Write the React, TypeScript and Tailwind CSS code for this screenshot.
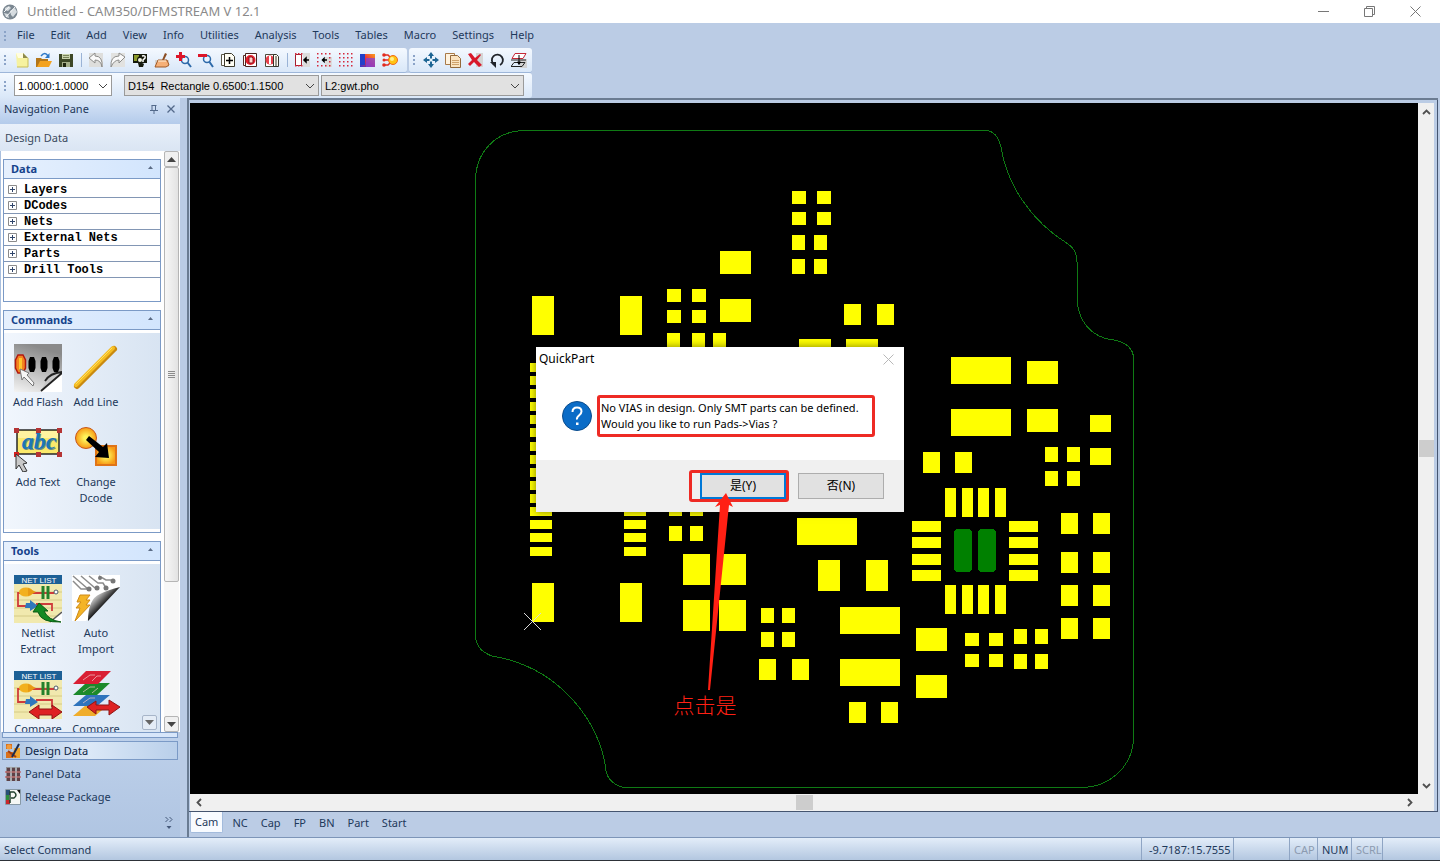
import React from "react";

type IconProps = { children: React.ReactNode };

type Rect = [x: number, y: number, w: number, h: number];

const menus = [
  "File",
  "Edit",
  "Add",
  "View",
  "Info",
  "Utilities",
  "Analysis",
  "Tools",
  "Tables",
  "Macro",
  "Settings",
  "Help",
];

const treeItems = [
  "Layers",
  "DCodes",
  "Nets",
  "External Nets",
  "Parts",
  "Drill Tools",
];

const tabs = ["Cam", "NC", "Cap", "FP", "BN", "Part", "Start"];

// every combination of the given columns and rows, all pads the same size
const pads = (xs: number[], ys: number[], w: number, h: number): Rect[] =>
  xs.flatMap((x) => ys.map((y): Rect => [x, y, w, h]));

const copper: Rect[] = [
  ...pads([792, 817], [191, 212], 14, 13),
  ...pads([792, 814], [235, 259], 13, 15),
  ...pads([720], [251, 299], 31, 23),
  ...pads([532, 620], [296, 583], 22, 39),
  ...pads([667, 692], [289, 310], 14, 13),
  ...pads([667, 692, 713], [333], 13, 15),
  ...pads([844, 877], [304], 17, 21),
  ...pads([799, 846], [339], 32, 23),
  ...pads(
    [530, 624],
    [363, 376, 389, 402, 415, 428, 442, 455, 468, 481, 494, 507, 520, 533, 547],
    22,
    9,
  ),
  ...pads([669, 690], [501, 526], 13, 15),
  ...pads([683, 719], [554, 600], 27, 31),
  ...pads([797], [518], 60, 27),
  ...pads([818, 866], [560], 22, 31),
  ...pads([761, 782], [608, 632], 13, 15),
  ...pads([759, 792], [659], 17, 21),
  ...pads([840], [607, 659], 60, 27),
  ...pads([849, 881], [702], 17, 21),
  ...pads([951], [357, 409], 60, 27),
  ...pads([1027], [361, 409], 31, 23),
  ...pads([1090], [415, 448], 21, 17),
  ...pads([1045, 1067], [447, 471], 13, 15),
  ...pads([923, 955], [452], 17, 21),
  ...pads([945, 962, 978, 995], [488, 585], 11, 29),
  ...pads([912, 1009], [521, 537, 554, 570], 29, 11),
  ...pads([1061, 1093], [513, 552, 585, 618], 17, 21),
  ...pads([916], [628, 675], 31, 23),
  ...pads([965, 989], [633, 654], 14, 13),
  ...pads([1014, 1035], [629, 654], 13, 15),
];

function SmallIcon({ children }: IconProps) {
  return (
    <svg viewBox="0 0 16 16" className="size-4 shrink-0" aria-hidden="true">
      {children}
    </svg>
  );
}

function LargeIcon({ children }: IconProps) {
  return (
    <svg viewBox="0 0 48 48" className="size-12 shrink-0" aria-hidden="true">
      {children}
    </svg>
  );
}

const dots = (xs: number[], ys: number[]) =>
  xs.flatMap((x) =>
    ys.map((y) => (
      <rect key={`${x}-${y}`} x={x} y={y} width="1.5" height="1.5" fill="#d4283c" />
    )),
  );

const fileTools = [
  {
    label: "New",
    icon: (
      <SmallIcon>
        <path d="M2 1h7l5 5v9H3z" fill="#f6f2a0" />
        <path d="M2 1h7v5H4z" fill="#fffde0" />
        <path d="M9 1l5 5H9z" fill="#8d8a4c" />
        <path d="M14 6v9H3" fill="none" stroke="#c8bd58" />
      </SmallIcon>
    ),
  },
  {
    label: "Open",
    icon: (
      <SmallIcon>
        <path d="M0 6h5l1 1h6v8H0z" fill="#b3761a" />
        <path d="M4 9h12l-3 6H1z" fill="#f3a21f" />
        <path d="M5 4q4-5 7 0" fill="none" stroke="#2c78c8" strokeWidth="1.5" />
        <path d="M13.500 1v5H9z" fill="#2c78c8" />
      </SmallIcon>
    ),
  },
  {
    label: "Save",
    icon: (
      <SmallIcon>
        <path d="M1 2h14v13H1z" fill="#3d4726" />
        <path d="M4 2h8v5H4z" fill="#c9d3ae" />
        <path d="M5 3.500h6M5 5.500h6" stroke="#78835a" />
        <path d="M4 10h8v5H4z" fill="#a5ae88" />
        <path d="M5 11h3v4H5z" fill="#20260f" />
      </SmallIcon>
    ),
  },
];

const editTools = [
  {
    label: "Undo",
    icon: (
      <SmallIcon>
        <path d="M1 1h14v14H1z" fill="#dededc" />
        <path d="M1 6l6-5v3q8 0 7 11-1-7-7-7v3z" fill="#fafafa" stroke="#8c8c8a" />
      </SmallIcon>
    ),
  },
  {
    label: "Redo",
    icon: (
      <SmallIcon>
        <path d="M1 1h14v14H1z" fill="#e2e2e0" />
        <path d="M15 5l-6-4v3Q0 4 1 15q3-7 8-7v3z" fill="#fafafa" stroke="#8c8c8a" />
      </SmallIcon>
    ),
  },
  {
    label: "Query",
    icon: (
      <SmallIcon>
        <path d="M1 2h14v9H1z" fill="#15190c" />
        <path d="M2 3h5v6H2z" fill="#8a9a2c" />
        <circle cx="9" cy="8" r="4" fill="#15190c" />
        <circle cx="8" cy="8" r="2" fill="#f3f5e6" />
        <path d="M10 4q4-1 3 2l-2 2v2" fill="none" stroke="#fff" strokeWidth="1.500" />
        <path d="M6 11l6 1-1 3H7z" fill="#15190c" />
      </SmallIcon>
    ),
  },
  {
    label: "Redraw",
    icon: (
      <SmallIcon>
        <path d="M1 8h14v7H1z" fill="#d6d2cf" />
        <path d="M11 1l2 1-3 6H8z" fill="#8a4d23" />
        <path d="M4 8h9l2 5-3 2H1z" fill="#f6b077" stroke="#a05a28" />
        <path d="M4 9h8" stroke="#fff1dd" />
      </SmallIcon>
    ),
  },
  {
    label: "Zoom in",
    icon: (
      <SmallIcon>
        <circle cx="9" cy="8" r="3.500" fill="#e8f3ff" stroke="#2d69a9" strokeWidth="1.500" />
        <path d="M11.500 10.500L15 15" stroke="#2d69a9" strokeWidth="2" />
        <path d="M3 0h3v3h3v3H6v3H3V6H0V3h3z" fill="#dd1629" />
      </SmallIcon>
    ),
  },
  {
    label: "Zoom out",
    icon: (
      <SmallIcon>
        <circle cx="9" cy="7" r="3.500" fill="#e8f3ff" stroke="#2d69a9" strokeWidth="1.500" />
        <path d="M11.500 10L15 15" stroke="#2d69a9" strokeWidth="2" />
        <path d="M0 2h9v3H0z" fill="#dd1629" />
      </SmallIcon>
    ),
  },
  {
    label: "Zoom window",
    icon: (
      <SmallIcon>
        <path d="M1.500 2.500h3v11h-3z" fill="#fff" stroke="#5a5747" />
        <path d="M4.500 1.500h7l3 3v10h-10z" fill="#fffef4" stroke="#3d3a2c" />
        <path d="M9.500 5v7M6 8.500h7" stroke="#000" strokeWidth="1.500" />
      </SmallIcon>
    ),
  },
  {
    label: "Film box",
    icon: (
      <SmallIcon>
        <path d="M1.500 3.500h3v10h-3z" fill="#fff" stroke="#5a2b24" />
        <path d="M3.500 1.500h11v13h-11z" fill="#fff" stroke="#4a2420" />
        <circle cx="8.500" cy="8" r="5" fill="#e3202e" />
        <path d="M7 5h3l1 1v5H7z" fill="#ffd6d0" stroke="#8e111b" />
      </SmallIcon>
    ),
  },
  {
    label: "Zoom previous",
    icon: (
      <SmallIcon>
        <path d="M1.500 2.500h9v12h-9z" fill="#fff" stroke="#4c4a3c" />
        <circle cx="6" cy="8" r="4.500" fill="#e8404c" />
        <path d="M6 4v8" stroke="#fff" strokeWidth="2" />
        <path d="M9.500 2.500h3l2 2v10h-5z" fill="#fffdf1" stroke="#35332a" />
        <path d="M12 4v10" stroke="#35332a" />
      </SmallIcon>
    ),
  },
];

const viewTools = [
  {
    label: "Snap to line",
    icon: (
      <SmallIcon>
        <path d="M9 1h7v14H9z" fill="#dcdcdc" />
        <path d="M1.500 2.500h6v11h-6z" fill="#fff" stroke="#a3202e" />
        {dots([1, 4, 7], [1, 13])}
        <path d="M15 8h-4M12 6L10 8l2 2z" fill="#000" stroke="#000" strokeWidth="1.500" />
      </SmallIcon>
    ),
  },
  {
    label: "Snap to grid",
    icon: (
      <SmallIcon>
        <path d="M9 5h7v10H9z" fill="#dcdcdc" />
        {dots([1, 5, 9, 13], [1, 13])}
        {dots([1, 13], [5, 9])}
        <path d="M11 8H7M8 6.500L6.500 8 8 9.500z" fill="#000" stroke="#000" strokeWidth="1.500" />
      </SmallIcon>
    ),
  },
  {
    label: "Grid",
    icon: <SmallIcon>{dots([1, 5, 9, 13], [1, 5, 9, 13])}</SmallIcon>,
  },
  {
    label: "Colors",
    icon: (
      <SmallIcon>
        <defs>
          <linearGradient id="swatch" x1="1" y1="0" x2="0" y2="1">
            <stop offset="0" stopColor="#f9a01d" />
            <stop offset="0.500" stopColor="#ee2b3e" />
            <stop offset="1" stopColor="#2c35d6" />
          </linearGradient>
        </defs>
        <path d="M0 2h15v13H0z" fill="url(#swatch)" />
        <path d="M0 2h5v11H0z" fill="#2440c9" />
        <path d="M6 6h9v9H6z" fill="#7a44e4" fillOpacity="0.7" />
      </SmallIcon>
    ),
  },
  {
    label: "Highlight",
    icon: (
      <SmallIcon>
        <path d="M1 3h5l3 3M1 8h6M1 13h5l3-3" fill="none" stroke="#e22b20" strokeWidth="1.500" />
        <circle cx="2" cy="3" r="1.800" fill="#e22b20" />
        <circle cx="2" cy="8" r="1.500" fill="#e22b20" />
        <circle cx="2" cy="13" r="1.800" fill="#e22b20" />
        <circle cx="11" cy="8" r="4.500" fill="#ffc414" stroke="#f06a1c" />
        <circle cx="10" cy="7" r="2" fill="#fff08a" />
      </SmallIcon>
    ),
  },
];

const objectTools = [
  {
    label: "Move",
    icon: (
      <SmallIcon>
        <path
          d="M8 0l3 4H9v3h3V5l4 3-4 3V9H9v3h2l-3 4-3-4h2V9H4v2L0 8l4-3v2h3V4H5z"
          fill="#1d6594"
        />
        <path d="M6.500 6.500h3v3h-3z" fill="#e6f6ff" />
      </SmallIcon>
    ),
  },
  {
    label: "Copy",
    icon: (
      <SmallIcon>
        <path d="M.5 1.500h9v11h-9z" fill="#fff3df" stroke="#a87a48" />
        <path d="M5.500 3.500h7l3 3v9h-10z" fill="#fbe3bf" stroke="#94693a" />
        <path d="M7 8.500h7M7 10.500h7M7 12.500h7" stroke="#d0a26a" />
      </SmallIcon>
    ),
  },
  {
    label: "Delete",
    icon: (
      <SmallIcon>
        <path d="M9 1h7v14H9z" fill="#d5d5d5" />
        <path d="M1 2l3-1 4 5 5-4 1 1-4 5 5 5-3 2-5-5-4 4-2-2 4-4z" fill="#d8182b" />
      </SmallIcon>
    ),
  },
  {
    label: "Rotate",
    icon: (
      <SmallIcon>
        <path d="M5 12.500A5.500 5.500 0 1 1 11 13" fill="none" stroke="#20242a" strokeWidth="1.800" />
        <path d="M1 10h6v6z" fill="#20242a" />
      </SmallIcon>
    ),
  },
  {
    label: "Mirror",
    icon: (
      <SmallIcon>
        <path d="M9 7h7v9H9z" fill="#d3d3d3" />
        <path d="M4 1.500h11l-3 5H1z" fill="#fff" stroke="#c62a39" />
        <path d="M0 8h15" stroke="#222" />
        <path d="M3 10.500h11l-3 4H0z" fill="none" stroke="#222" />
        <path d="M8 3v8M6.500 10L8 12.500 9.500 10z" fill="#000" stroke="#000" />
      </SmallIcon>
    ),
  },
];

function NetlistArt() {
  return (
    <>
      <path d="M0 0h48v48H0z" fill="#f1e9ae" />
      <path d="M0 17h48M0 25h48M0 33h48M0 41h48" stroke="#d4ca86" />
      <path d="M0 0h48v9H0z" fill="#1d6096" />
      <text
        x="25"
        y="8"
        fill="#fff"
        fontSize="8"
        fontFamily="Liberation Sans, sans-serif"
        textAnchor="middle"
      >
        NET LIST
      </text>
      <path d="M10 18H4v13h10M18 18h22M22 29h16v7" fill="none" stroke="#cf3b3b" strokeWidth="1.800" />
      <ellipse cx="12" cy="17" rx="7" ry="4.500" fill="#f2b01e" />
      <path d="M14 13l8 4-8 4z" fill="#e89a14" />
      <path d="M12 28h4v-3l8 6-8 5v-3h-5z" fill="#2f78bd" />
      <path d="M29 11v13M34 11v13" stroke="#23812b" strokeWidth="3" />
      <circle cx="42" cy="17" r="2" fill="#fff" stroke="#4b5a68" />
    </>
  );
}

const commandItems = [
  {
    label: "Add Flash",
    icon: (
      <LargeIcon>
        <defs>
          <linearGradient id="flash-bg" x1="0.300" y1="0" x2="0" y2="1">
            <stop offset="0" stopColor="#8a8a8a" />
            <stop offset="1" stopColor="#f4f4f4" />
          </linearGradient>
        </defs>
        <path d="M0 0h48v48H0z" fill="url(#flash-bg)" />
        <path d="M48 29v19H27z" fill="#fff" />
        <path d="M48 28L27 47l6-12q5-7 15-7z" fill="#c8c8c8" />
        <path d="M48 28q-12 1-17 9M48 29L27 47" fill="none" stroke="#222" strokeWidth="1.800" />
        <path d="M16 13h4l1.500 4v7L20 28h-4l-1.500-4v-7zM28 13h4l1.500 4v7L32 28h-4l-1.500-4v-7zM40 13h4l1.500 4v7L44 28h-4l-1.500-4v-7z" />
        <path d="M4 11h5l2.500 5v8L9 29H4l-2.500-5v-8z" fill="#f4831f" stroke="#b3190f" strokeWidth="1.500" />
        <path d="M5 14h3v12H5z" fill="#ffc62e" />
        <path d="M6 25l9 4-2 2 7 8-1 3-9-9-2 3z" fill="#f6f6f6" stroke="#777" />
      </LargeIcon>
    ),
  },
  {
    label: "Add Line",
    icon: (
      <LargeIcon>
        <path d="M5 42L42 5" stroke="#c98a10" strokeWidth="6" strokeLinecap="round" />
        <path d="M4 41L41 4" stroke="#f5bd22" strokeWidth="4" strokeLinecap="round" />
        <path d="M4 40L40 4" stroke="#ffdf63" strokeLinecap="round" />
      </LargeIcon>
    ),
  },
  {
    label: "Add Text",
    icon: (
      <LargeIcon>
        <path d="M3 6h42v24H3z" fill="#fbe96b" stroke="#272727" strokeWidth="1.500" />
        <path d="M4 7h40v7H4z" fill="#fff3a0" />
        <text
          x="26"
          y="26"
          fill="#6c8a86"
          fontSize="24"
          fontWeight="bold"
          fontStyle="italic"
          fontFamily="Liberation Serif, serif"
          textAnchor="middle"
        >
          abc
        </text>
        <text
          x="25"
          y="25"
          fill="#1b77b8"
          fontSize="24"
          fontWeight="bold"
          fontStyle="italic"
          fontFamily="Liberation Serif, serif"
          textAnchor="middle"
        >
          abc
        </text>
        <path d="M0 4h5v5H0zM22 4h5v5h-5zM43 4h5v5h-5zM43 28h5v5h-5zM22 28h5v5h-5z" fill="#b53434" />
        <path d="M0 28h5v5H0z" fill="#d42020" />
        <path d="M2 30l11 9-4 1 4 7-4 1-4-7-3 4z" fill="#c9c9c9" stroke="#333" />
      </LargeIcon>
    ),
  },
  {
    label: "Change Dcode",
    icon: (
      <LargeIcon>
        <defs>
          <radialGradient id="dcode">
            <stop offset="0.200" stopColor="#fff45a" />
            <stop offset="1" stopColor="#f79a14" />
          </radialGradient>
        </defs>
        <circle cx="14" cy="14" r="10.500" fill="url(#dcode)" stroke="#c8571c" />
        <path d="M24 22h20v19H24z" fill="url(#dcode)" stroke="#e07417" strokeWidth="2" />
        <path d="M17 12l14 11 4-4 2 15-14-1 4-5L14 16z" fill="#000" />
      </LargeIcon>
    ),
  },
];

const toolItems = [
  {
    label: "Netlist Extract",
    icon: (
      <LargeIcon>
        <NetlistArt />
        <path d="M48 36v12H36z" fill="#fff" />
        <path d="M48 37L36 47" stroke="#555" strokeWidth="1.500" />
        <path d="M25 28l9 8h-4q4 9 17 11-20 1-23-10h-5z" fill="#138a22" stroke="#0a5c14" />
      </LargeIcon>
    ),
  },
  {
    label: "Auto Import",
    icon: (
      <LargeIcon>
        <defs>
          <linearGradient
            id="page-curl"
            gradientUnits="userSpaceOnUse"
            x1="20"
            y1="18"
            x2="33"
            y2="31"
          >
            <stop offset="0" stopColor="#fff" />
            <stop offset="0.400" stopColor="#a5a5a5" />
            <stop offset="0.900" stopColor="#1a1a1a" />
          </linearGradient>
        </defs>
        <path d="M0 0h48v12L14 46H0z" fill="#fff" />
        <path d="M48 12L16 46q0-22 12-27 8-4 20-7z" fill="url(#page-curl)" />
        <path
          d="M1 1l15 13M9 1l14 12M1 6l8 8h7M17 1l9 7h5l3 5M27 1l7 4h5"
          fill="none"
          stroke="#8c8c8c"
          strokeWidth="1.500"
        />
        <circle cx="17" cy="14" r="2.500" fill="#777" />
        <circle cx="25" cy="13" r="2.500" fill="#777" />
        <circle cx="34" cy="13" r="2.500" fill="#777" />
        <circle cx="28" cy="3" r="2" fill="#777" />
        <circle cx="41" cy="6" r="2.500" fill="#777" />
        <path d="M8 20h10l-4 5h4l-4 5h4L3 46l5-13H4l5-6H5z" fill="#f4b426" stroke="#cf8a16" />
      </LargeIcon>
    ),
  },
  {
    label: "Compare",
    icon: (
      <LargeIcon>
        <NetlistArt />
        <path d="M15 41l10-7v4h13v-4l10 7-10 7v-4H25v4z" fill="#de2222" stroke="#8f1414" />
      </LargeIcon>
    ),
  },
  {
    label: "Compare",
    icon: (
      <LargeIcon>
        <path d="M14 34h22L23 45H1z" fill="#f0ad2b" />
        <path d="M14 24h24L25 35H1z" fill="#2f74bd" />
        <path d="M14 12h24L25 24H1z" fill="#1c8a2b" />
        <path d="M14 0h25L26 13H1z" fill="#d91f33" />
        <path
          d="M11 9l7-5h5M20 10l5-5h4M11 21l7-5h5M20 22l6-5M11 32l7-5h5"
          fill="none"
          stroke="#f0c9c9"
          strokeWidth="0.700"
        />
        <path d="M15 36l9-6v4h13v-5l11 7-11 8v-5H24v4z" fill="#de2222" stroke="#8f1414" />
      </LargeIcon>
    ),
  },
];

const views = [
  {
    label: "Design Data",
    icon: (
      <SmallIcon>
        <path d="M1 1h6v5H1zM1 9h7v6H1z" fill="#d9701c" />
        <circle cx="4" cy="4" r="2.500" fill="#f19b3c" />
        <path d="M9 5h6v10H8z" fill="#efa42b" />
        <path d="M3 8l8 6" stroke="#a33c10" strokeWidth="2" />
        <path d="M14 1L7 14" stroke="#1d2c50" strokeWidth="2" />
      </SmallIcon>
    ),
  },
  {
    label: "Panel Data",
    icon: (
      <SmallIcon>
        <path d="M1 1h14v14H1z" fill="#8d8f93" />
        <path d="M2 2h3v3H2zM7 2h3v3H7zM12 2h3v3h-3zM2 7h3v3H2zM7 7h3v3H7zM12 7h3v3h-3zM2 12h3v3H2zM7 12h3v3H7zM12 12h3v3h-3z" fill="#5d4248" />
        <path d="M0 6h16M0 11h16" stroke="#c2413f" />
        <path d="M6 0v16M11 0v16" stroke="#bfc7cc" />
      </SmallIcon>
    ),
  },
  {
    label: "Release Package",
    icon: (
      <SmallIcon>
        <path d="M.5.5h15v15H.5z" fill="#f5f7f5" stroke="#8799a6" />
        <path d="M1 1h4v5H1z" fill="#274f77" />
        <path d="M1 6h3v5H1z" fill="#2b8c3c" />
        <path d="M1 11h4v4H1z" fill="#c9262c" />
        <path d="M5 14V3h4q4 3 0 6H6" fill="none" stroke="#1f3f2c" strokeWidth="1.500" />
        <path d="M12 1h3v4z" fill="#111" />
      </SmallIcon>
    ),
  },
];

function Grip() {
  return (
    <svg viewBox="0 0 11 16" className="h-4 w-[11px] shrink-0" aria-hidden="true">
      <path d="M4 3h2v2H4zM4 7h2v2H4zM4 11h2v2H4z" fill="#8ba3c7" />
    </svg>
  );
}

function ToolButtons({ items }: { items: { label: string; icon: React.ReactNode }[] }) {
  return (
    <>
      {items.map((item) => (
        <button
          key={item.label}
          aria-label={item.label}
          className="flex size-[22px] shrink-0 items-center justify-center"
        >
          {item.icon}
        </button>
      ))}
    </>
  );
}

function Separator() {
  return (
    <div className="flex w-2 shrink-0 justify-center">
      <div className="h-3.5 w-px bg-[#9ab3d6]" />
    </div>
  );
}

function Combo({ label, value, className }: { label: string; value: string; className: string }) {
  return (
    <div className={`relative h-[21px] shrink-0 ${className}`}>
      <select
        aria-label={label}
        className="size-full appearance-none border border-[#9a9a9a] pt-px pr-5 pl-[3px] font-['Liberation_Sans',sans-serif] text-[11px] text-black"
      >
        <option>{value}</option>
      </select>
      <svg
        viewBox="0 0 10 6"
        className="pointer-events-none absolute top-2 right-1 h-1.5 w-2.5"
        aria-hidden="true"
      >
        <path d="M1 1l4 4 4-4" fill="none" stroke="#444" />
      </svg>
    </div>
  );
}

function PanelHeader({ title }: { title: string }) {
  return (
    <button className="flex h-[19px] w-full shrink-0 items-center justify-between border-b border-[#7b9ac6] bg-linear-to-r from-[#e6f0fd] to-[#d2e5fd] px-[7px] pt-px font-bold text-[#15428b]">
      {title}
      <svg viewBox="0 0 5 3" className="mb-1 h-[3px] w-[5px]" aria-hidden="true">
        <path d="M0 3l2.500-3L5 3z" fill="#5a6b85" />
      </svg>
    </button>
  );
}

function IconGrid({ items }: { items: { label: string; icon: React.ReactNode }[] }) {
  return (
    <div className="mt-[3px] grid grid-cols-[58px_58px] gap-y-3.5 bg-linear-to-r from-[#f1f6fd] to-[#d8e4f2] pt-[11px] pb-[23px] pl-[5px]">
      {items.map((item, i) => (
        <button key={i} className="flex flex-col items-center gap-0.5 text-center leading-4">
          {item.icon}
          <span>{item.label}</span>
        </button>
      ))}
    </div>
  );
}

function NavigationPane() {
  return (
    <aside className="flex w-[180px] shrink-0 flex-col text-[#1e395b]">
      <div className="flex h-[26px] shrink-0 items-center justify-between bg-linear-to-b from-[#d9e6f7] to-[#b4cbeb] px-1 pb-1">
        <span>Navigation Pane</span>
        <div className="flex items-center gap-[7px]">
          <button aria-label="Pin">
            <svg viewBox="0 0 10 10" className="size-2.5">
              <path d="M3 1.500v5M6.500 1.500v5M2.500 1.500h5M1 6.500h8M5 7v3" fill="none" stroke="#53698a" />
            </svg>
          </button>
          <button aria-label="Close pane">
            <svg viewBox="0 0 10 10" className="size-2.5">
              <path d="M1.500 1.500l7 7M8.500 1.500l-7 7" stroke="#53698a" strokeWidth="1.300" />
            </svg>
          </button>
        </div>
      </div>

      <div className="flex h-[27px] shrink-0 items-center bg-linear-to-b from-[#e9f0fa] to-[#dae5f3] pt-px pl-[5px] text-[#3b4a60]">
        Design Data
      </div>

      <div className="flex min-h-0 flex-1 border-l border-[#a9bfde] bg-white pl-0.5">
        <div className="relative flex min-w-0 flex-1 flex-col gap-2 overflow-hidden pt-2">
          <section className="flex h-[143px] shrink-0 flex-col border border-[#7b9ac6]">
            <PanelHeader title="Data" />
            <ul className="pt-[3px] font-['Liberation_Mono',monospace] text-[12px] font-bold text-black">
              {treeItems.map((item) => (
                <li key={item} className="border-b border-[#8296b4]">
                  <button className="flex h-[15px] w-full items-center gap-[7px] pl-1">
                    <svg viewBox="0 0 9 9" className="size-[9px]" aria-hidden="true">
                      <path d="M.5.5h8v8h-8z" fill="#fff" stroke="#8b8b8b" />
                      <path d="M2 4.500h5M4.500 2v5" stroke="#31466b" />
                    </svg>
                    {item}
                  </button>
                </li>
              ))}
            </ul>
          </section>

          <section className="shrink-0 border border-[#7b9ac6] pb-[3px]">
            <PanelHeader title="Commands" />
            <IconGrid items={commandItems} />
          </section>

          <section className="shrink-0 border border-[#7b9ac6]">
            <PanelHeader title="Tools" />
            <IconGrid items={toolItems} />
          </section>

          <button
            aria-label="More tools"
            className="absolute right-1 bottom-[2px] flex size-[15px] items-center justify-center rounded-[2px] border border-[#a7b5c9] bg-[#e4ecf6]"
          >
            <svg viewBox="0 0 9 5" className="h-[5px] w-[9px]">
              <path d="M0 0h9L4.500 5z" fill="#666" />
            </svg>
          </button>
        </div>

        <div className="mr-px ml-[3px] flex w-[15px] shrink-0 flex-col bg-[#f7f7f7]">
          <button
            aria-label="Scroll up"
            className="flex h-4 items-center justify-center rounded-[2px] border border-[#b5b5b5] bg-[#f0f0f0]"
          >
            <svg viewBox="0 0 9 5" className="h-[5px] w-[9px]">
              <path d="M0 5h9L4.500 0z" fill="#444" />
            </svg>
          </button>
          <div className="flex h-5/7 items-center justify-center rounded-[2px] border border-[#b5b5b5] bg-linear-to-r from-[#f7f7f7] to-[#e3e3e3]">
            <svg viewBox="0 0 7 7" className="size-[7px]" aria-hidden="true">
              <path d="M0 .5h7M0 2.500h7M0 4.500h7M0 6.500h7" stroke="#8c8c8c" />
            </svg>
          </div>
          <button
            aria-label="Scroll down"
            className="mt-auto flex h-4 items-center justify-center rounded-[2px] border border-[#b5b5b5] bg-[#f0f0f0]"
          >
            <svg viewBox="0 0 9 5" className="h-[5px] w-[9px]">
              <path d="M0 0h9L4.500 5z" fill="#444" />
            </svg>
          </button>
        </div>
      </div>

      <div className="mx-0.5 h-[6px] shrink-0 border border-[#7b9ac6] bg-[#d7e6fa]" />

      <nav className="flex flex-col gap-1 bg-linear-to-b from-[#bdd0ea] to-[#b0c5e2] px-0.5 pt-[3px]">
        {views.map((view, i) => (
          <button
            key={view.label}
            className={`flex h-[19px] items-center gap-1 border px-0.5 pt-px ${
              i === 0
                ? "border-[#7b9ac6] bg-linear-to-r from-[#aec6e4] via-[#dbe8f7] to-[#b9cfea] text-[#0c2445]"
                : "border-transparent"
            }`}
          >
            {view.icon}
            {view.label}
          </button>
        ))}
        <button aria-label="Configure buttons" className="mb-[3px] flex h-6 items-center self-end pr-1">
          <svg viewBox="0 0 10 13" className="h-[13px] w-2.5">
            <path d="M1.500 1l2.500 2.500L1.500 6M5.500 1L8 3.500 5.500 6" fill="none" stroke="#45597a" />
            <path d="M2.500 10h5L5 13z" fill="#45597a" />
          </svg>
        </button>
      </nav>
    </aside>
  );
}

function Board() {
  return (
    <svg
      viewBox="190 103 1228 691"
      className="block size-full"
      shapeRendering="crispEdges"
      role="img"
      aria-label="Board layout"
    >
      <path
        d="M524 130.500H986Q997 131 1001 147C1007 185 1031 221 1068 244Q1077 250 1077 262V297C1077 320 1091 338 1114 340Q1133 344 1133.500 358V738C1133 766 1110 787 1082 787.500H624Q609 784 606 771C601 723 560 667 492 656Q475 650 475.500 634V182C475 153 495 131 524 130.500Z"
        fill="none"
        stroke="#0f7a14"
      />
      {copper.map(([x, y, w, h]) => (
        <rect key={`${x}-${y}`} x={x} y={y} width={w} height={h} fill="#ffff00" />
      ))}
      <rect x="954" y="529" width="18" height="43" rx="4" fill="#008000" />
      <rect x="978" y="529" width="18" height="43" rx="4" fill="#008000" />
      <path d="M524 613l17 17M541 613l-17 17" stroke="#d8d8d8" />
    </svg>
  );
}

function Workspace() {
  return (
    <main className="mr-0.5 ml-[7px] flex min-w-0 flex-1 flex-col border-t-2 border-l-2 border-[#6b7c92]">
      <div className="flex min-h-0 flex-1 flex-col border-r border-b border-[#44546f] pt-[3px] pr-[3px] pl-px">
        <div className="flex min-h-0 flex-1">
          <div className="min-w-0 flex-1 bg-black">
            <Board />
          </div>
          <div className="flex w-4 shrink-0 flex-col items-center justify-between bg-[#f0f0f0]">
            <button aria-label="Scroll canvas up" className="flex h-[17px] items-center">
              <svg viewBox="0 0 9 6" className="h-1.5 w-[9px]">
                <path d="M1 5l3.500-3.500L8 5" fill="none" stroke="#505050" strokeWidth="1.800" />
              </svg>
            </button>
            <div className="h-[17px] w-[15px] bg-[#cdcdcd]" />
            <button aria-label="Scroll canvas down" className="flex h-[17px] items-center">
              <svg viewBox="0 0 9 6" className="h-1.5 w-[9px]">
                <path d="M1 1l3.500 3.500L8 1" fill="none" stroke="#505050" strokeWidth="1.800" />
              </svg>
            </button>
          </div>
        </div>
        <div className="flex h-[17px] shrink-0 items-center justify-between bg-[#f0f0f0] pr-4">
          <button aria-label="Scroll canvas left" className="flex w-[17px] justify-center">
            <svg viewBox="0 0 6 9" className="h-[9px] w-1.5">
              <path d="M5 1L1.500 4.500 5 8" fill="none" stroke="#505050" strokeWidth="1.800" />
            </svg>
          </button>
          <div className="h-[15px] w-[17px] bg-[#cdcdcd]" />
          <button aria-label="Scroll canvas right" className="flex w-[17px] justify-center">
            <svg viewBox="0 0 6 9" className="h-[9px] w-1.5">
              <path d="M1 1l3.500 3.500L1 8" fill="none" stroke="#505050" strokeWidth="1.800" />
            </svg>
          </button>
        </div>
      </div>
      <div className="flex h-[25px] shrink-0 items-start gap-[5px] pl-px text-[#1e395b]">
        {tabs.map((tab, i) => (
          <button
            key={tab}
            className={`h-[21px] px-1 pt-px ${
              i === 0 ? "rounded-b-[2px] border border-t-0 border-[#a3bbdc] bg-[#f8fbff]" : ""
            }`}
          >
            {tab}
          </button>
        ))}
      </div>
    </main>
  );
}

function QuickPartDialog() {
  return (
    <div className="absolute inset-0 flex items-center justify-center pb-0.5">
      <div
        role="dialog"
        aria-label="QuickPart"
        className="relative w-[368px] bg-white text-black shadow-[0_0_8px_rgba(0,0,0,0.5)]"
      >
        <div className="flex h-6 items-center justify-between pr-2.5 pl-[3px] text-[12px]">
          <span>QuickPart</span>
          <button aria-label="Close dialog">
            <svg viewBox="0 0 11 11" className="size-[11px]">
              <path d="M.5.5l10 10M10.500.5l-10 10" stroke="#b8b8b8" />
            </svg>
          </button>
        </div>
        <div className="flex h-[89px] items-center gap-[5px] pl-[26px]">
          <svg viewBox="0 0 30 30" className="size-[30px] shrink-0" aria-hidden="true">
            <circle cx="15" cy="15" r="14.500" fill="#0a6cc7" stroke="#0b4c8c" />
            <path
              d="M10.500 11q0-4.500 4.500-4.500t4.500 4q0 2-2.500 4t-2 4"
              fill="none"
              stroke="#fff"
              strokeWidth="2"
            />
            <path d="M14 21.500h2.500v2.500H14z" fill="#fff" />
          </svg>
          <p className="w-[278px] rounded-[3px] border-3 border-[#ee2a24] px-px py-[2px] leading-4 whitespace-nowrap">
            No VIAS in design. Only SMT parts can be defined.
            <br />
            Would you like to run Pads-&gt;Vias ?
          </p>
        </div>
        <div className="flex h-[52px] items-center justify-end gap-[9px] bg-[#f0f0f0] pr-5">
          <div className="rounded-[3px] border-3 border-[#ee2a24] pl-2">
            <button className="block h-[26px] w-[86px] border-2 border-[#0078d7] bg-[#e1e1e1] text-[12px]">
              是(Y)
            </button>
          </div>
          <button className="h-[26px] w-[86px] border border-[#adadad] bg-[#e1e1e1] text-[12px]">
            否(N)
          </button>
        </div>
        <div className="pointer-events-none absolute top-[146px] left-[136px] flex w-[66px] flex-col items-center text-[#ff2014]">
          <svg viewBox="672 493 66 198" className="h-[198px] w-[66px]" aria-hidden="true">
            <path d="M726 493l7 14-4-2-19 185h-2l12-185-5 2z" fill="#ff2014" />
          </svg>
          <span className="font-['Noto_Sans_CJK_SC',sans-serif] text-[21px] leading-[26px] font-light whitespace-nowrap">
            点击是
          </span>
        </div>
      </div>
    </div>
  );
}

function App() {
  return (
    <div className="relative flex h-screen flex-col overflow-hidden bg-[#bbcce5] font-['Noto_Sans','Noto_Sans_CJK_SC',sans-serif] text-[11px]">
      <header className="flex h-[23px] shrink-0 items-center justify-between bg-white pr-[19px] pl-0.5 text-[#8a8a8a]">
        <div className="flex items-center gap-[9px]">
          <SmallIcon>
            <circle cx="8" cy="8" r="7.500" fill="#7b8791" />
            <path d="M3 4l4-2 2 2-3 3-3-1zM8 7l5-3 2 4-4 5-2-2zM2 9l4 1 1 4-3-1z" fill="#d5dbdf" />
            <path d="M4 13L13 3M2 8l5-5" stroke="#f4f6f7" />
          </SmallIcon>
          <h1 className="text-[13px]">Untitled - CAM350/DFMSTREAM V 12.1</h1>
        </div>
        <div className="flex items-center gap-[35px]">
          <button aria-label="Minimize">
            <svg viewBox="0 0 11 11" className="size-[11px]">
              <path d="M0 5.500h11" stroke="#777" />
            </svg>
          </button>
          <button aria-label="Restore">
            <svg viewBox="0 0 11 11" className="size-[11px]">
              <path d="M.5 2.500h8v8h-8zM2.500 2V.5h8v8H9" fill="none" stroke="#777" />
            </svg>
          </button>
          <button aria-label="Close">
            <svg viewBox="0 0 11 11" className="size-[11px]">
              <path d="M.5.5l10 10M10.500.5l-10 10" stroke="#777" />
            </svg>
          </button>
        </div>
      </header>

      <nav className="flex h-[25px] shrink-0 items-center text-[#1e395b]">
        <Grip />
        <div className="flex gap-4 pl-1.5">
          {menus.map((menu) => (
            <button key={menu}>{menu}</button>
          ))}
        </div>
      </nav>

      <div className="flex h-[25px] shrink-0 gap-0.5">
        <div className="flex items-center rounded-r-[3px] border-b border-[#9db6d9] bg-linear-to-b from-[#f4f9ff] to-[#d9e7f8] pr-1.5">
          <Grip />
          <ToolButtons items={fileTools} />
          <Separator />
          <ToolButtons items={editTools} />
          <Separator />
          <ToolButtons items={viewTools} />
        </div>
        <div className="flex items-center rounded-[3px] border-b border-[#9db6d9] bg-linear-to-b from-[#f4f9ff] to-[#d9e7f8] pr-0.5">
          <Grip />
          <ToolButtons items={objectTools} />
        </div>
      </div>

      <div className="flex h-[25px] shrink-0">
        <div className="flex items-center rounded-r-[3px] bg-linear-to-b from-[#f4f9ff] to-[#d9e7f8] pr-2">
          <Grip />
          <div className="flex pl-[3px]">
            <Combo label="Grid" value="1.0000:1.0000" className="mr-3 w-[98px] bg-white" />
            <Combo
              label="Aperture"
              value={"D154\u00a0 Rectangle 0.6500:1.1500"}
              className="mr-0.5 w-[195px] bg-[#e1e1e1]"
            />
            <Combo label="Layer" value="L2:gwt.pho" className="w-[203px] bg-[#e1e1e1]" />
          </div>
        </div>
      </div>

      <div className="flex min-h-0 flex-1">
        <NavigationPane />
        <Workspace />
      </div>

      <footer className="flex h-6 shrink-0 items-stretch justify-between border-t border-b border-t-[#7d95b8] border-b-[#2d3138] bg-linear-to-b from-[#e3edf9] to-[#b3c7e0] pl-1 leading-6 text-[#1e395b]">
        <span>Select Command</span>
        <div className="flex items-stretch pr-[57px]">
          <span className="w-[92px] border-l border-[#8fa5c4] pl-[7px]">-9.7187:15.7555</span>
          <span className="w-14 border-l border-[#8fa5c4]" />
          <span className="w-7 border-l border-[#8fa5c4] pl-1 text-[#8c9bb0]">CAP</span>
          <span className="w-[34px] border-l border-[#8fa5c4] pl-1">NUM</span>
          <span className="w-8 border-x border-[#8fa5c4] pl-1 text-[#8c9bb0]">SCRL</span>
        </div>
      </footer>
      <QuickPartDialog />
    </div>
  );
}

export default App;
